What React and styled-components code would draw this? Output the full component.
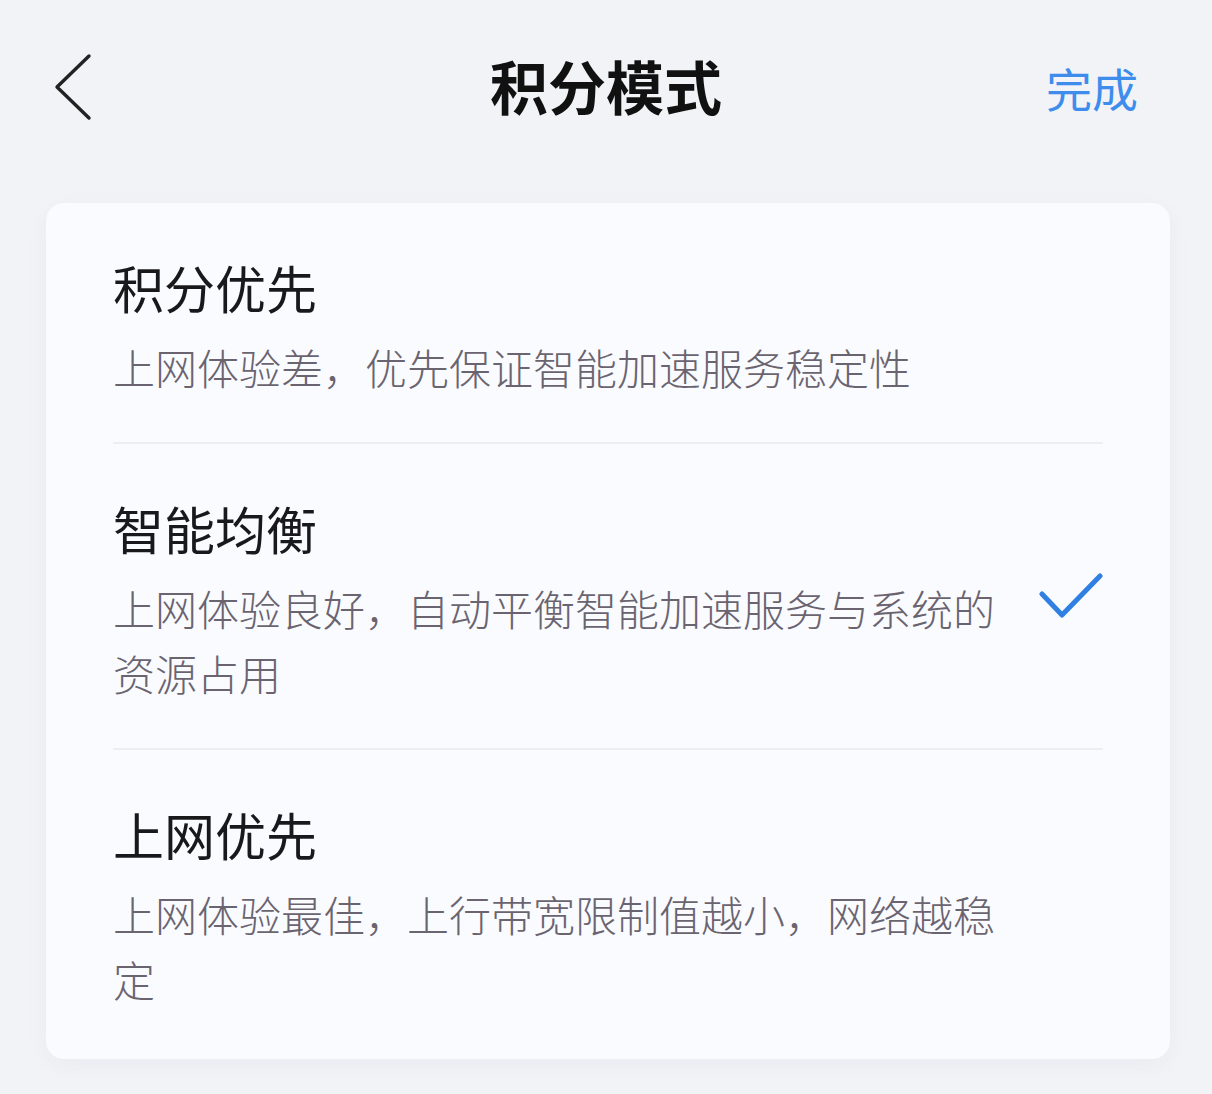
import React from "react";
import styled, { createGlobalStyle } from "styled-components";

const Global = createGlobalStyle`
  html, body { margin: 0; padding: 0; background: #f1f3f6; }
  body { font-family: "Noto Sans CJK SC", "Noto Sans", sans-serif; }
  * { box-sizing: border-box; }
`;

const Page = styled.div`
  width: 1212px;
  min-height: 1094px;
  background: #f1f3f6;
  padding: 0 42px 0 46px;
`;

const Header = styled.header`
  height: 174px;
  display: grid;
  grid-template-columns: 1fr auto 1fr;
  align-items: center;
  margin-left: -46px;
  margin-right: -42px;
  padding: 0 53px;
`;

const BackButton = styled.button`
  justify-self: start;
  background: none;
  border: 0;
  padding: 0;
  display: flex;
  width: 42px;
  height: 68px;
  cursor: pointer;
`;

const Title = styled.h1`
  margin: 0;
  font-size: 58px;
  font-weight: 700;
  color: #111;
  line-height: 1;
  letter-spacing: 0;
  transform: translateY(-2px);
`;

const Done = styled.button`
  justify-self: end;
  background: none;
  border: 0;
  padding: 0 21px 0 0;
  font-family: inherit;
  font-size: 46px;
  color: #3e8ded;
  line-height: 1;
  cursor: pointer;
`;

const Card = styled.section`
  margin-top: 29px;
  background: #fafbfe;
  border-radius: 18px;
  padding: 0 67px;
  box-shadow: 0 6px 18px rgba(200, 205, 215, 0.18);
`;

const Option = styled.div`
  display: flex;
  align-items: center;
  padding: 51px 0 ${(p) => (p.$last ? "48px" : "43px")};
  border-bottom: ${(p) => (p.$last ? "none" : "2px solid #eceef3")};
  cursor: pointer;
`;

const TextBlock = styled.div`
  width: 900px;
  display: flex;
  flex-direction: column;
  gap: 14px;
`;

const OptionTitle = styled.div`
  font-size: 51px;
  line-height: 66px;
  color: #19191b;
  font-weight: 400;
`;

const OptionDesc = styled.div`
  font-size: 42px;
  line-height: 65px;
  color: #6a6470;
  font-weight: 300;
`;

const CheckSlot = styled.div`
  margin-left: auto;
  margin-bottom: 8px;
  width: 64px;
  height: 46px;
  display: flex;
  align-items: center;
  justify-content: flex-end;
`;

const options = [
  { title: "积分优先", desc: "上网体验差，优先保证智能加速服务稳定性" },
  {
    title: "智能均衡",
    desc: "上网体验良好，自动平衡智能加速服务与系统的资源占用",
    checked: true,
  },
  { title: "上网优先", desc: "上网体验最佳，上行带宽限制值越小，网络越稳定" },
];

export default function App() {
  return (
    <>
      <Global />
      <Page>
        <Header>
          <BackButton aria-label="返回">
            <svg width="42" height="68" viewBox="0 0 42 68" fill="none">
              <path
                d="M36 3 L4 34 L36 65"
                stroke="#222"
                strokeWidth="3.4"
                strokeLinecap="round"
                strokeLinejoin="round"
              />
            </svg>
          </BackButton>
          <Title>积分模式</Title>
          <Done>完成</Done>
        </Header>
        <Card>
          {options.map((o, i) => (
            <Option key={o.title} $last={i === options.length - 1}>
              <TextBlock>
                <OptionTitle>{o.title}</OptionTitle>
                <OptionDesc>{o.desc}</OptionDesc>
              </TextBlock>
              <CheckSlot>
                {o.checked && (
                  <svg width="64" height="46" viewBox="0 0 64 46" fill="none">
                    <path
                      d="M3 21 L23 42 L61 3"
                      stroke="#2f80e2"
                      strokeWidth="5"
                      strokeLinecap="round"
                      strokeLinejoin="round"
                    />
                  </svg>
                )}
              </CheckSlot>
            </Option>
          ))}
        </Card>
      </Page>
    </>
  );
}
